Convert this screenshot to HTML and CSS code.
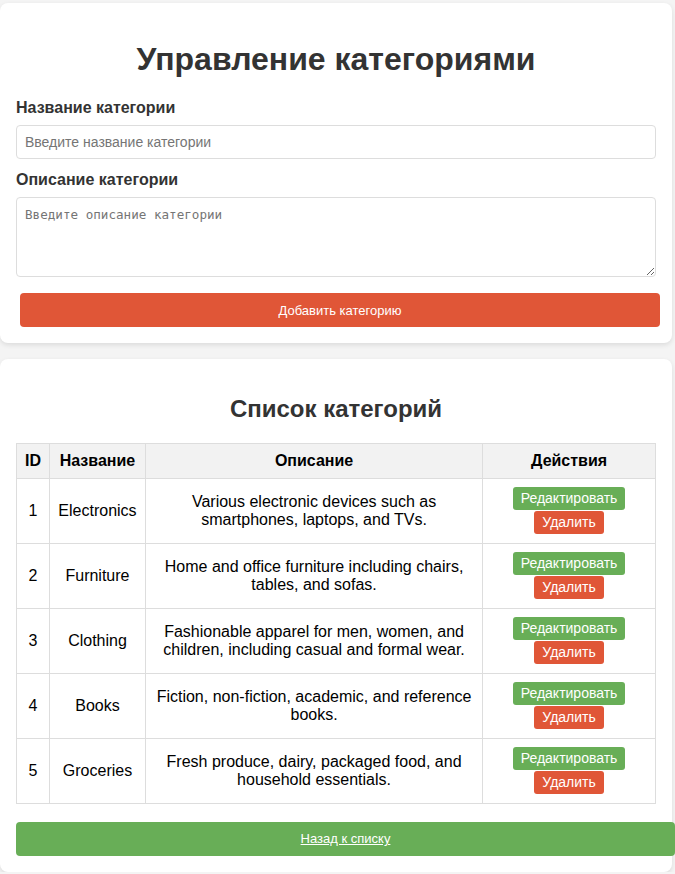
FILE: index.html
```html
<!DOCTYPE html>
<html lang="ru">
<head>
<meta charset="utf-8">
<title>Управление категориями</title>
<link rel="stylesheet" href="styles.css">
</head>
<body>
<div class="page">
  <section class="card form-card">
    <h1 class="title">Управление категориями</h1>
    <form class="form">
      <label class="label" for="name">Название категории</label>
      <input class="input" id="name" type="text" placeholder="Введите название категории">
      <label class="label label-second" for="desc">Описание категории</label>
      <textarea class="textarea" id="desc" placeholder="Введите описание категории"></textarea>
      <button class="btn-add" type="button">Добавить категорию</button>
    </form>
  </section>

  <section class="card list-card">
    <h2 class="subtitle">Список категорий</h2>
    <table class="table">
      <thead>
        <tr>
          <th class="col-id">ID</th>
          <th class="col-name">Название</th>
          <th class="col-desc">Описание</th>
          <th class="col-act">Действия</th>
        </tr>
      </thead>
      <tbody>
        <tr>
          <td>1</td>
          <td>Electronics</td>
          <td>Various electronic devices such as smartphones, laptops, and TVs.</td>
          <td><div class="actions"><button class="btn-edit" type="button">Редактировать</button><button class="btn-del" type="button">Удалить</button></div></td>
        </tr>
        <tr>
          <td>2</td>
          <td>Furniture</td>
          <td>Home and office furniture including chairs, tables, and sofas.</td>
          <td><div class="actions"><button class="btn-edit" type="button">Редактировать</button><button class="btn-del" type="button">Удалить</button></div></td>
        </tr>
        <tr>
          <td>3</td>
          <td>Clothing</td>
          <td>Fashionable apparel for men, women, and children, including casual and formal wear.</td>
          <td><div class="actions"><button class="btn-edit" type="button">Редактировать</button><button class="btn-del" type="button">Удалить</button></div></td>
        </tr>
        <tr>
          <td>4</td>
          <td>Books</td>
          <td>Fiction, non-fiction, academic, and reference books.</td>
          <td><div class="actions"><button class="btn-edit" type="button">Редактировать</button><button class="btn-del" type="button">Удалить</button></div></td>
        </tr>
        <tr>
          <td>5</td>
          <td>Groceries</td>
          <td>Fresh produce, dairy, packaged food, and household essentials.</td>
          <td><div class="actions"><button class="btn-edit" type="button">Редактировать</button><button class="btn-del" type="button">Удалить</button></div></td>
        </tr>
      </tbody>
    </table>
    <a class="btn-back" href="#">Назад к списку</a>
  </section>
</div>
</body>
</html>
```

FILE: styles.css
```css
* {
  box-sizing: border-box;
}

html, body {
  margin: 0;
  padding: 0;
}

body {
  background: #f4f4f4;
  font-family: "Liberation Sans", Arial, sans-serif;
  color: #333;
}

.page {
  padding-top: 3px;
  display: flex;
  flex-direction: column;
  gap: 16px;
  width: 672px;
}

.card {
  background: #fff;
  border-radius: 8px;
  box-shadow: 0 2px 5px rgba(0, 0, 0, 0.1);
  padding: 16px;
}

.title {
  margin: 22px 0 0;
  font-size: 32px;
  line-height: 37px;
  font-weight: bold;
  text-align: center;
  color: #333;
}

.form {
  display: flex;
  flex-direction: column;
  margin-top: 21px;
}

.label {
  font-size: 16px;
  line-height: 18px;
  font-weight: bold;
  color: #333;
  margin-bottom: 8px;
}

.label-second {
  margin-top: 12px;
  margin-bottom: 8px;
}

.input {
  width: 100%;
  height: 34px;
  padding: 8px;
  border: 1px solid #ddd;
  border-radius: 4px;
  font-family: "Liberation Sans", Arial, sans-serif;
  font-size: 14px;
  color: #333;
}

.input::placeholder {
  color: #757575;
}

.textarea {
  width: 100%;
  height: 80px;
  padding: 9px 8px 8px;
  border: 1px solid #ddd;
  border-radius: 4px;
  font-family: "DejaVu Sans Mono", "Liberation Mono", monospace;
  font-size: 12.6px;
  line-height: 16px;
  color: #333;
  resize: both;
}

.textarea::placeholder {
  color: #757575;
}

.btn-add {
  margin: 16px 0 0 4px;
  width: 100%;
  height: 34px;
  background: #e05637;
  color: #fff;
  border: none;
  border-radius: 4px;
  font-family: "Liberation Sans", Arial, sans-serif;
  font-size: 13px;
}

.subtitle {
  margin: 20px 0 0;
  font-size: 24px;
  line-height: 28px;
  font-weight: bold;
  text-align: center;
  color: #333;
}

.table {
  width: 640px;
  margin-top: 20px;
  border-collapse: collapse;
  font-size: 16px;
  color: #000;
}

.table th,
.table td {
  border: 1px solid #ddd;
  padding: 8px;
  text-align: center;
  vertical-align: middle;
  line-height: 18px;
}

.table th {
  background: #f2f2f2;
  font-weight: bold;
}

.col-id { width: 33px; }
.col-name { width: 96px; }
.col-desc { width: 338px; }
.col-act { width: 173px; }

.actions {
  display: flex;
  flex-direction: column;
  align-items: center;
  gap: 1px;
  padding-bottom: 1px;
}

.btn-edit,
.btn-del {
  border: none;
  border-radius: 3px;
  color: #fff;
  font-family: "Liberation Sans", Arial, sans-serif;
  font-size: 14px;
  line-height: 17px;
  padding: 3px 8px;
}

.btn-edit {
  background: #68ae57;
}

.btn-del {
  background: #e05637;
}

.btn-back {
  display: block;
  margin-top: 18px;
  width: 659px;
  height: 34px;
  line-height: 34px;
  background: #68ae57;
  color: #fff;
  text-align: center;
  font-size: 13px;
  border-radius: 4px;
  text-decoration: underline;
}
```
